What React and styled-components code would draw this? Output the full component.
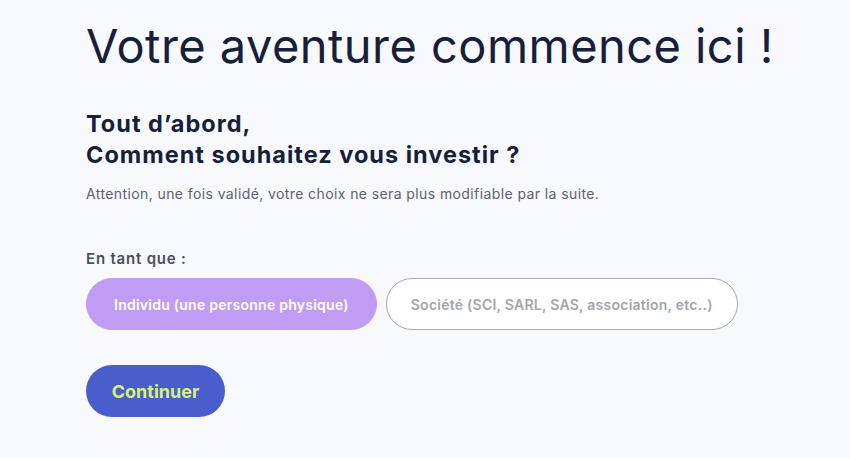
import React, { useState } from 'react';
import styled, { createGlobalStyle } from 'styled-components';

const GlobalStyle = createGlobalStyle`
  html, body {
    margin: 0;
    padding: 0;
    background: #f8f9fd;
  }
  body {
    font-family: Inter, "Noto Sans", sans-serif;
    color: #17203a;
  }
`;

const Page = styled.div`
  display: flex;
  flex-direction: column;
  padding: 18px 0 0 86px;
  min-height: 440px;
`;

const Title = styled.h1`
  margin: 0;
  font-size: 47px;
  font-weight: 400;
  line-height: 56px;
  letter-spacing: 0.45px;
  color: #17203a;
`;

const Heading = styled.h2`
  margin: 34px 0 0;
  font-size: 23.5px;
  font-weight: 700;
  line-height: 31px;
  letter-spacing: 1px;
  color: #17203a;
`;

const Notice = styled.p`
  margin: 15px 0 0;
  font-size: 14px;
  line-height: 18px;
  letter-spacing: 0.4px;
  color: #5c6270;
`;

const Label = styled.div`
  margin-top: 47px;
  font-size: 15px;
  font-weight: 600;
  line-height: 18px;
  letter-spacing: 0.8px;
  color: #4a4f5c;
`;

const Choices = styled.div`
  display: flex;
  gap: 9px;
  margin-top: 10px;
`;

const Choice = styled.button`
  height: 52px;
  box-sizing: border-box;
  padding: 0 ${(p) => p.$pad}px;
  border-radius: 26px;
  border: 1.5px solid ${(p) => (p.$active ? '#c19cf4' : '#a9abb3')};
  background: ${(p) => (p.$active ? '#c19cf4' : '#ffffff')};
  color: ${(p) => (p.$active ? '#ffffff' : '#a2a5ad')};
  font-family: inherit;
  font-size: 14px;
  font-weight: 600;
  letter-spacing: 0.25px;
  cursor: pointer;
`;

const Continue = styled.button`
  margin-top: 35px;
  align-self: flex-start;
  width: 139px;
  height: 52px;
  border: none;
  border-radius: 26px;
  background: #4a5dcc;
  color: #d6f27a;
  font-family: inherit;
  font-size: 18px;
  font-weight: 700;
  cursor: pointer;
`;

const options = [
  { id: 'individu', label: 'Individu (une personne physique)', pad: 27 },
  { id: 'societe', label: 'Société (SCI, SARL, SAS, association, etc..)', pad: 24 },
];

export default function App() {
  const [choice, setChoice] = useState('individu');
  return (
    <>
      <GlobalStyle />
      <Page>
        <Title>Votre aventure commence ici !</Title>
        <Heading>
          Tout d’abord,
          <br />
          Comment souhaitez vous investir ?
        </Heading>
        <Notice>Attention, une fois validé, votre choix ne sera plus modifiable par la suite.</Notice>
        <Label>En tant que :</Label>
        <Choices>
          {options.map((o) => (
            <Choice
              key={o.id}
              $pad={o.pad}
              $active={choice === o.id}
              onClick={() => setChoice(o.id)}
            >
              {o.label}
            </Choice>
          ))}
        </Choices>
        <Continue>Continuer</Continue>
      </Page>
    </>
  );
}
